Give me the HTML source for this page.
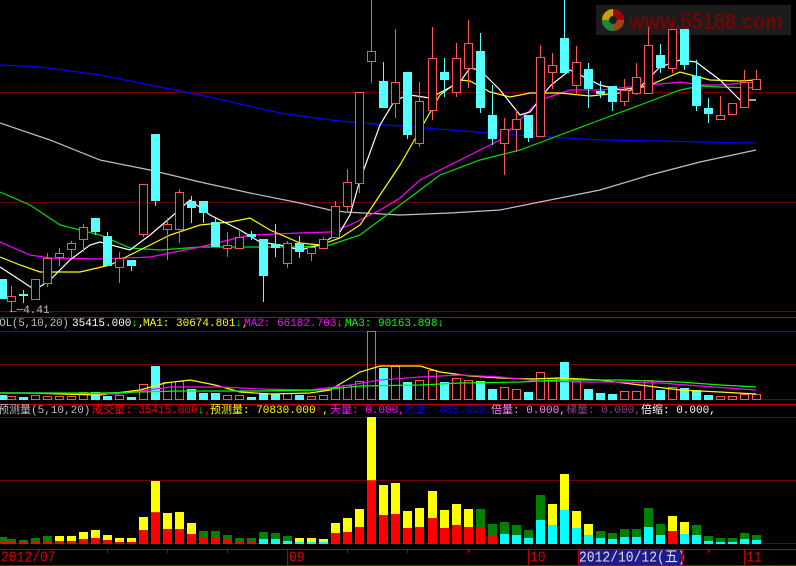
<!DOCTYPE html>
<html><head><meta charset="utf-8"><style>
html,body{margin:0;padding:0;background:#000;width:796px;height:566px;overflow:hidden}
#c{position:absolute;left:0;top:0}
.t{position:absolute;font-family:"Liberation Mono","Noto Sans CJK SC",monospace;font-size:11px;line-height:12px;white-space:pre}
.ax{position:absolute;font-family:"Liberation Mono",monospace;font-size:13px;color:#d00;transform:scaleY(1.15);transform-origin:0 0;line-height:13px}
</style></head><body>
<svg id="c" width="796" height="566" xmlns="http://www.w3.org/2000/svg">
<g id="grid" shape-rendering="crispEdges">
<line x1="0" y1="92.5" x2="796" y2="92.5" stroke="#6e0000"/>
<line x1="0" y1="202.5" x2="796" y2="202.5" stroke="#6e0000"/>
<line x1="0" y1="311.5" x2="796" y2="311.5" stroke="#6e0000"/>
<line x1="0" y1="317.5" x2="796" y2="317.5" stroke="#c00000"/>
<line x1="0" y1="331.5" x2="796" y2="331.5" stroke="#6e0000"/>
<line x1="0" y1="364.5" x2="796" y2="364.5" stroke="#6e0000"/>
<line x1="0" y1="399.5" x2="796" y2="399.5" stroke="#6e0000"/>
<line x1="0" y1="404.5" x2="796" y2="404.5" stroke="#c00000"/>
<line x1="0" y1="417.5" x2="796" y2="417.5" stroke="#6e0000"/>
<line x1="0" y1="480.5" x2="796" y2="480.5" stroke="#6e0000"/>
<line x1="0" y1="543.5" x2="796" y2="543.5" stroke="#6e0000"/>
<line x1="0" y1="549.5" x2="796" y2="549.5" stroke="#c00000"/>
<line x1="0" y1="565.5" x2="796" y2="565.5" stroke="#c00000"/>
<line x1="287.5" y1="549" x2="287.5" y2="566" stroke="#c00000"/>
<line x1="528.5" y1="549" x2="528.5" y2="566" stroke="#c00000"/>
<line x1="744.5" y1="549" x2="744.5" y2="566" stroke="#c00000"/>
</g>
<g id="ticks" stroke="#c00000" shape-rendering="crispEdges"></g>
<rect x="596" y="5" width="195" height="30" fill="#1c1c1c"/>
<g transform="translate(613,20)">
<circle r="11" fill="#c8a000"/>
<path d="M0,-11 A11,11 0 0 1 11,0 L4,0 A4,4 0 0 0 0,-4Z" fill="#a00000"/>
<path d="M-11,0 A11,11 0 0 0 0,11 L0,4 A4,4 0 0 1 -4,0Z" fill="#1a8a3a"/>
<path d="M0,11 A11,11 0 0 0 11,0 L4,0 A4,4 0 0 1 0,4Z" fill="#a04020"/>
<circle r="4" fill="#1c1c1c"/>
</g>
<text x="629" y="29" font-family="Liberation Sans,sans-serif" font-weight="bold" font-size="22" fill="#700606" textLength="154" lengthAdjust="spacingAndGlyphs">www.55188.com</text>
<g id="main"></g>
</svg>
<div class="t" style="left:10px;top:305px;color:#c0c0c0">←─4.41</div>
<div class="t" style="left:-7px;top:318px;color:#c0c0c0;letter-spacing:-0.3px">VOL(5,10,20)</div>
<div class="t" style="left:72px;top:318px;color:#fff">35415.000<span style="color:#0f0">↓</span>,</div>
<div class="t" style="left:143px;top:318px;color:#ff0">MA1: 30674.801<span style="color:#0f0">↓</span>,</div>
<div class="t" style="left:244px;top:318px;color:#f0f">MA2: 66182.703<span style="color:#0f0">↓</span>,</div>
<div class="t" style="left:345px;top:318px;color:#0f0">MA3: 90163.898↓</div>
<div class="t" style="left:-2px;top:405px;color:#c0c0c0">预测量(5,10,20)</div>
<div class="t" style="left:92px;top:405px;color:#f00">成交量: 35415.000<span style="color:#0f0">↓</span>,</div>
<div class="t" style="left:210px;top:405px;color:#ff0">预测量: 70830.000<span style="color:#f00">↑</span>,</div>
<div class="t" style="left:330px;top:405px;color:#f0f">天量: 0.000,</div>
<div class="t" style="left:404px;top:405px;color:#00f">地量: 888.000,</div>
<div class="t" style="left:491px;top:405px;color:#f8f">倍量: 0.000,</div>
<div class="t" style="left:566px;top:405px;color:#848">梯量: 0.000,</div>
<div class="t" style="left:641px;top:405px;color:#fff">倍缩: 0.000,</div>
<div class="ax" style="left:1px;top:550px">2012/07</div>
<div class="ax" style="left:289px;top:550px">09</div>
<div class="ax" style="left:530px;top:550px">10</div>
<div class="ax" style="left:746px;top:550px">11</div>
<div class="ax" style="left:579px;top:550px;width:103px;height:13px;background:#1c1c8c;color:#ddd;outline:1px solid #c00000">2012/10/12(五)</div>
<script>
var C=[[1.5,279,299,279,299,'c'],[11,296,301,286,311,'r'],[23,294,296,290,303,'c'],[35,279,299,279,299,'r'],[47,258,283,253,287,'r'],[59,253,257,248,266,'r'],[71,243,249,241,258,'r'],[83,227,239,224,252,'r'],[95,218,232,218,235,'c'],[107,236,266,232,266,'c'],[119,258,267,252,283,'r'],[131,260,266,260,271,'c'],[143,184,234,184,237,'r'],[155,134,201,134,206,'c'],[167,224,229,218,260,'r'],[179,192,229,189,243,'r'],[191,201,208,196,223,'c'],[203,201,213,201,223,'c'],[215,222,247,218,247,'c'],[227,245,248,232,257,'r'],[239,237,248,231,248,'r'],[251,234,237,231,240,'c'],[263,239,276,239,302,'c'],[275,244,248,224,257,'c'],[287,243,263,241,268,'r'],[299,243,252,236,258,'c'],[311,247,253,247,261,'r'],[323,239,248,237,248,'r'],[335,206,237,201,237,'r'],[347,182,206,169,212,'r'],[359,92,183,92,193,'r'],[371,51,61,0,83,'r'],[383,81,108,62,108,'c'],[395,82,103,29,118,'r'],[407,72,135,72,139,'c'],[419,101,143,82,147,'r'],[432,58,110,27,120,'r'],[444,72,80,58,97,'c'],[456,58,92,43,97,'r'],[468,43,68,20,88,'r'],[480,51,108,33,113,'c'],[492,115,139,85,145,'c'],[504,129,143,118,175,'r'],[516,119,129,110,152,'r'],[528,115,138,115,142,'c'],[540,57,136,45,136,'r'],[552,65,72,53,89,'r'],[564,38,73,0,73,'c'],[576,62,85,46,95,'r'],[588,69,89,63,108,'c'],[600,91,94,81,98,'c'],[612,86,102,86,111,'c'],[624,90,101,79,106,'r'],[636,77,93,63,95,'r'],[648,45,93,27,93,'r'],[660,55,68,44,73,'c'],[672,29,68,29,73,'r'],[684,29,65,29,70,'c'],[696,76,106,60,111,'c'],[708,108,114,98,123,'c'],[720,115,119,96,119,'r'],[732,103,114,103,115,'r'],[744,82,107,70,107,'r'],[756,79,89,70,90,'r']];
var V=[5,3,3,4,3,3,3,7,8,4,4,3,15,34,17,18,11,7,7,4,4,3,7,6,6,5,3,4,12,14,18,68,32,33,18,19,29,18,21,19,19,11,12,10,8,27,21,38,18,11,7,6,8,8,19,10,12,12,10,5,3,3,5,5];
var B=[[381,393,'g'],[387,393,'g'],[390,396,'g'],[384,393,'g'],[378,393,'g'],[378,393,'y'],[378,393,'y'],[366,387,'y'],[360,384,'y'],[375,390,'y'],[384,396,'y'],[384,396,'y'],[321,360,'y'],[213,307,'y'],[309,357,'y'],[306,357,'y'],[339,372,'y'],[363,384,'g'],[363,384,'g'],[375,390,'g'],[384,396,'g'],[384,396,'g'],[366,387,'G'],[369,387,'G'],[378,393,'G'],[384,396,'Y'],[384,396,'Y'],[387,396,'Y'],[339,369,'y'],[324,366,'y'],[297,351,'y'],[21,211,'y'],[225,315,'y'],[219,312,'y'],[303,354,'y'],[294,351,'y'],[243,324,'y'],[300,354,'y'],[282,345,'y'],[297,351,'y'],[297,351,'g'],[342,375,'g'],[336,372,'G'],[345,375,'G'],[360,384,'G'],[255,330,'G'],[282,345,'Y'],[192,300,'Y'],[303,354,'Y'],[342,375,'Y'],[363,384,'G'],[369,387,'G'],[357,381,'G'],[357,381,'G'],[294,351,'G'],[342,375,'G'],[318,363,'y'],[336,372,'Y'],[345,375,'G'],[378,393,'G'],[384,396,'G'],[384,396,'G'],[369,387,'G'],[375,390,'G']];
var s='';
function L(p,c){s+='<polyline fill="none" stroke="'+c+'" stroke-width="1.2" points="'+p+'"/>';}
L('0,65 40,67 100,75 150,85 200,95 280,113 330,120 385,125 400,126 450,130 500,134 550,137 600,140 660,141 700,142 756,143','#0000ff');
L('0,123 50,140 100,160 150,170 200,182 250,193 300,203 330,210 345,212 400,215 450,213 500,210 550,200 600,190 650,175 700,162 756,150','#c0c0c0');
L('0,192 30,205 60,225 100,235 130,248 160,250 200,247 250,247 300,247 330,245 360,235 380,220 400,205 440,175 480,160 520,150 560,135 600,120 640,105 680,90 700,86 720,87 756,88','#00e000');
L('0,242 30,255 50,258 100,259 150,257 200,247 250,235 300,233 330,232 350,225 380,210 400,198 420,180 460,160 500,140 540,100 570,90 600,90 640,86 680,82 700,85 720,85 756,82','#ff00ff');
L('0,257 20,265 40,272 80,272 110,265 140,250 170,235 200,225 230,222 250,218 270,230 300,243 320,245 340,238 360,225 380,195 400,165 420,130 440,95 460,80 470,81 490,92 510,97 530,93 560,93 590,96 620,93 650,85 680,72 710,80 740,81 756,80','#ffff00');
L('0,267 20,280 35,290 50,280 70,260 90,245 100,242 130,250 150,235 170,218 190,200 210,215 240,230 260,242 280,245 300,250 320,245 340,232 350,215 360,180 380,125 395,100 410,95 430,98 460,82 470,68 480,70 500,90 520,115 530,112 550,86 570,70 600,85 620,90 640,87 660,67 680,60 696,62 720,80 740,100 756,100','#ffffff');
C.forEach(function(c,i){var x=Math.round(c[0]),r=c[5]=='r',col=r?'#ff5555':'#55ffff';
 s+='<line x1="'+(x+.5)+'" y1="'+c[3]+'" x2="'+(x+.5)+'" y2="'+c[4]+'" stroke="'+col+'"/>';
 if(r){s+='<rect x="'+(x-3.5)+'" y="'+(c[1]+.5)+'" width="8" height="'+Math.max(1,c[2]-c[1])+'" fill="#000" stroke="'+col+'"/>';s+='<line x1="'+(x+.5)+'" y1="'+c[3]+'" x2="'+(x+.5)+'" y2="'+c[1]+'" stroke="'+col+'"/><line x1="'+(x+.5)+'" y1="'+c[2]+'" x2="'+(x+.5)+'" y2="'+c[4]+'" stroke="'+col+'"/>';}
 else s+='<rect x="'+(x-4)+'" y="'+c[1]+'" width="9" height="'+Math.max(1,c[2]-c[1])+'" fill="'+col+'"/>';
 var h=V[i];
 if(r)s+='<rect x="'+(x-3.5)+'" y="'+(399.5-h)+'" width="8" height="'+h+'" fill="none" stroke="#ff5555"/>';
 else s+='<rect x="'+(x-4)+'" y="'+(400-h)+'" width="9" height="'+h+'" fill="#55ffff"/>';
 var b=B[i],top=410+b[0]/3,mid=410+b[1]/3,bot=544,t=b[2];
 var up=(t=='y'||t=='Y')?'#ffff00':'#008000',lo=(t=='G'||t=='Y')?'#00ffff':'#ff0000';
 s+='<rect x="'+(x-4)+'" y="'+top+'" width="9" height="'+(mid-top)+'" fill="'+up+'"/><rect x="'+(x-4)+'" y="'+mid+'" width="9" height="'+(bot-mid)+'" fill="'+lo+'"/>';
});
L('0,393 30,393 60,394 100,395 140,390 165,383 190,380 215,385 240,392 270,394 310,393 330,390 360,372 380,366 400,366 420,366 440,372 470,376 500,378 530,379 560,378 600,380 640,385 680,390 720,392 756,394','#ffff00');
L('0,393 60,393 120,394 170,387 220,387 260,389 310,390 350,385 380,380 420,377 460,375 500,377 540,381 580,382 620,382 660,383 700,386 756,390','#ff00ff');
L('0,393 100,393 180,391 260,391 320,390 360,386 420,385 460,383 520,382 560,380 620,380 680,382 720,385 756,387','#00ff00');
document.getElementById('main').innerHTML=s;
var tk='';[107,167,227,347,407,468,708].forEach(function(x){tk+='<line x1="'+(x+.5)+'" y1="549" x2="'+(x+.5)+'" y2="553"/>';});
document.getElementById('ticks').innerHTML=tk;
</script>
</body></html>
